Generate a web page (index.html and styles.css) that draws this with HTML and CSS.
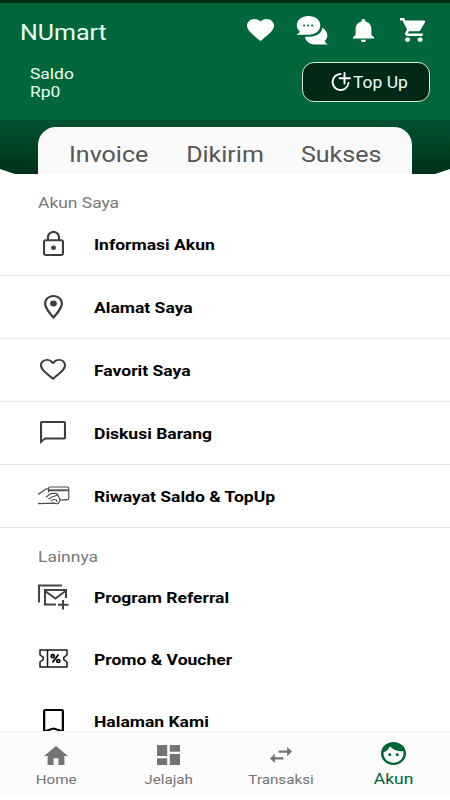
FILE: index.html
```html
<!DOCTYPE html>
<html lang="id">
<head>
<meta charset="utf-8">
<title>NUmart</title>
<link rel="stylesheet" href="styles.css">
</head>
<body>
<div class="app">
  <header class="header">
    <div class="toolbar">
      <h1 class="brand"><span class="wide">NUmart</span></h1>
      <div class="actions">
        <svg class="heart" viewBox="2 3 20 18.35" preserveAspectRatio="none"><path d="M12 21.35l-1.45-1.32C5.4 15.36 2 12.28 2 8.5 2 5.42 4.42 3 7.5 3c1.74 0 3.41.81 4.5 2.09C13.09 3.81 14.76 3 16.5 3 19.58 3 22 5.42 22 8.5c0 3.78-3.4 6.86-8.55 11.54z"/></svg>
        <svg class="chat" viewBox="0 0 32 29"><path d="M12.500 0C5.800 0 .8 4 .8 9.300c0 2.700 1.200 4.700 3 6.200C3.300 17 1.700 18.200.2 18.800h12.300c6.900 0 11.800-4 11.800-9.500S19.200 0 12.500 0z"/><path d="M26.300 11.700c3.200 1.800 5 4.400 5 7.500 0 2.400-1 4.400-2.600 5.900.5 1.400 1.700 2.600 3 3.500H19.700c-5.600 0-9.900-3.100-10.900-7.900h4.700c7 0 12.200-3.600 12.800-9z"/><g class="dots"><circle cx="8.200" cy="9.500" r="1.100"/><circle cx="12.200" cy="9.500" r="1.100"/><circle cx="16.200" cy="9.500" r="1.100"/></g></svg>
        <svg class="bell" viewBox="4 2.500 16 19.500" preserveAspectRatio="none"><path d="M12 22c1.100 0 2-.9 2-2h-4c0 1.100.89 2 2 2zm6-6v-5c0-3.070-1.640-5.640-4.500-6.320V4c0-.83-.67-1.500-1.500-1.500s-1.500.67-1.500 1.500v.68C7.630 5.360 6 7.920 6 11v5l-2 2v1h16v-1l-2-2z"/></svg>
        <svg class="cart" viewBox="1 2 20.700 20" preserveAspectRatio="none"><path d="M7 18c-1.100 0-1.990.9-1.990 2S5.900 22 7 22s2-.9 2-2-.9-2-2-2zM1 2v2h2l3.600 7.590-1.350 2.450c-.16.28-.25.61-.25.960 0 1.100.9 2 2 2h12v-2H7.420c-.14 0-.25-.11-.25-.25l.03-.12.9-1.630h7.450c.75 0 1.410-.41 1.750-1.030l3.580-6.490c.08-.14.12-.31.12-.48 0-.55-.45-1-1-1H5.210l-.94-2H1zm16 16c-1.100 0-1.990.9-1.990 2s.89 2 1.990 2 2-.9 2-2-.9-2-2-2z"/></svg>
      </div>
    </div>
    <div class="wallet">
      <div class="balance"><span class="wide">Saldo<br>Rp0</span></div>
      <button class="topup">
        <svg viewBox="0 0 21 20"><path d="M10.500 2A8 8 0 1 0 18.500 11M14.500 1v10.500M9.500 6.300h10.500"/></svg>
        <span class="wide">Top Up</span>
      </button>
    </div>
  </header>

  <div class="band">
    <div class="tabs">
      <a class="tab"><span class="wide">Invoice</span></a>
      <a class="tab"><span class="wide">Dikirim</span></a>
      <a class="tab"><span class="wide">Sukses</span></a>
    </div>
  </div>

  <main class="content">
    <h2 class="section"><span class="wide">Akun Saya</span></h2>
    <ul class="list ruled">
      <li><i class="icon"><svg class="lock" viewBox="4 1 16 21" preserveAspectRatio="none"><path d="M18 8h-1V6c0-2.760-2.240-5-5-5S7 3.240 7 6v2H6c-1.100 0-2 .9-2 2v10c0 1.100.9 2 2 2h12c1.100 0 2-.9 2-2V10c0-1.100-.9-2-2-2zM8.600 6c0-1.860 1.540-3.400 3.400-3.400s3.400 1.540 3.400 3.400v2H8.600V6zm9.800 14.400H5.600V9.600h12.800v10.800z"/><circle cx="12" cy="15" r="1.900"/></svg></i><span class="wide">Informasi Akun</span></li>
      <li><i class="icon"><svg class="pin" viewBox="5 2 14 20" preserveAspectRatio="none"><path d="M12 2C8.130 2 5 5.130 5 9c0 5.250 7 13 7 13s7-7.750 7-13c0-3.870-3.130-7-7-7zM6.700 9c0-2.900 2.400-5.300 5.300-5.300s5.300 2.400 5.300 5.300c0 2.880-3.180 7.490-5.300 10.180C9.920 16.510 6.700 11.850 6.700 9z"/><circle cx="12" cy="9" r="2.500"/></svg></i><span class="wide">Alamat Saya</span></li>
      <li><i class="icon"><svg class="love" viewBox="2 3 20 18.350" preserveAspectRatio="none"><path d="M16.500 3c-1.740 0-3.410.81-4.500 2.090C10.910 3.810 9.240 3 7.500 3 4.420 3 2 5.420 2 8.500c0 3.780 3.400 6.860 8.550 11.540L12 21.350l1.450-1.320C18.600 15.360 22 12.280 22 8.500 22 5.420 19.580 3 16.500 3zm-4.400 15.950l-.1.100-.1-.1C7.140 14.640 3.600 11.490 3.600 8.500 3.600 6.300 5.300 4.600 7.500 4.600c1.540 0 3.040 1.090 3.570 2.460h1.870C13.460 5.690 14.960 4.600 16.500 4.600c2.200 0 3.900 1.700 3.900 3.900 0 2.990-3.540 6.140-8.300 10.450z"/></svg></i><span class="wide">Favorit Saya</span></li>
      <li><i class="icon"><svg class="bubble" viewBox="2 2 20 20" preserveAspectRatio="none"><path d="M20.500 2H3.500Q2 2 2 3.500V22l4-4h14.500q1.500 0 1.500-1.500V3.500Q22 2 20.500 2zm-.1 14.300H5.500l-1.900 1.900V3.700h16.800v12.600z"/></svg></i><span class="wide">Diskusi Barang</span></li>
      <li><i class="icon"><svg class="hand" viewBox="0 0 33 20"><path d="M1 8.600L9 3 12 2.600M11.500 6.500V2.500Q11.500 1 13 1H30.300Q31.800 1 31.800 2.500V12Q31.800 13.800 30 13.800H22.500M9 11.300l4.500-3.600q6.500-.8 7 .7-.4 1.300-5.500 2.600l-3.500 2.300M20.500 8.600l2.300 4.200q.7 2.500-1.200 4.200-1.700 1.400-4 .2L10 17.400 1 17.700M14 15.200q1-1.800 3.500-1.700 2.600.4 2 2.500"/><path class="stripe" d="M12 4.300H31.500"/></svg></i><span class="wide">Riwayat Saldo &amp; TopUp</span></li>
    </ul>
    <h2 class="section second"><span class="wide">Lainnya</span></h2>
    <ul class="list">
      <li><i class="icon"><svg class="mail" viewBox="0 0 31 26"><path d="M1 18.500V1.500H24M7 20.500V6H28V14M6 20.500H18M7 7l10.500 7.500L27.500 7M25 16v9.500M20 20.700h10.500"/></svg></i><span class="wide">Program Referral</span></li>
      <li><i class="icon"><svg class="ticket" viewBox="0 0 29 19"><path d="M1 1H28V6L24.800 8.300V10.700L28 13V18H1V13L4.200 10.700V8.300L1 6ZM8.500 1V18"/><g class="percent"><path d="M19.500 5.500L13.500 13.500"/><circle cx="13.700" cy="7.200" r="1.500"/><circle cx="19.300" cy="12" r="1.500"/></g></svg></i><span class="wide">Promo &amp; Voucher</span></li>
      <li><i class="icon"><svg class="mark" viewBox="5 3 14 18" preserveAspectRatio="none"><path d="M17.500 3H6.500Q5 3 5 4.500V21l7-2.600 7 2.600V4.500Q19 3 17.500 3zm0 15.800L12 16.800l-5.500 2V4.500h11v14.300z"/></svg></i><span class="wide">Halaman Kami</span></li>
    </ul>
  </main>

  <nav class="nav">
    <a><i><svg class="home" viewBox="2 3 20 17" preserveAspectRatio="none"><path d="M10 20v-6h4v6h5v-8h3L12 3 2 12h3v8z"/></svg></i><span class="wide">Home</span></a>
    <a><i><svg class="grid" viewBox="3 3 18 18" preserveAspectRatio="none"><path d="M3 13h8V3H3v10zm0 8h8v-6H3v6zm10 0h8V11h-8v10zm0-18v6h8V3h-8z"/></svg></i><span class="wide">Jelajah</span></a>
    <a><i><svg class="swap" viewBox="3 5 18 14" preserveAspectRatio="none"><path d="M6.990 11L3 15l3.990 4v-3H14v-2H6.990v-3zM21 9l-3.990-4v3H10v2h7.010v3L21 9z"/></svg></i><span class="wide">Transaksi</span></a>
    <a class="active"><i><svg class="face" viewBox="2 2 20 20" preserveAspectRatio="none"><path d="M9 11.750c-.69 0-1.250.56-1.250 1.250s.56 1.250 1.250 1.250 1.250-.56 1.250-1.250-.56-1.250-1.250-1.250zm6 0c-.69 0-1.250.56-1.250 1.250s.56 1.250 1.250 1.250 1.250-.56 1.250-1.250-.56-1.250-1.250-1.250zM12 2C6.480 2 2 6.480 2 12s4.480 10 10 10 10-4.480 10-10S17.520 2 12 2zm0 18c-4.410 0-8-3.590-8-8 0-.29.02-.58.05-.86 2.360-1.050 4.230-2.980 5.210-5.370C11.070 8.330 14.050 10 17.420 10c.78 0 1.530-.09 2.250-.26.21.71.33 1.470.33 2.260 0 4.410-3.590 8-8 8z"/></svg></i><span class="wide">Akun</span></a>
  </nav>
</div>
</body>
</html>
```

FILE: styles.css
```css
* { box-sizing: border-box; margin: 0; padding: 0; }
body { font-family: Roboto, "Liberation Sans", sans-serif; background: #fff; }
svg { display: block; flex: none; overflow: visible; }
.wide { display: inline-block; transform: scaleX(1.125); transform-origin: left center; white-space: nowrap; }

.app { width: 450px; height: 800px; display: flex; flex-direction: column; overflow: hidden; background: #fff; }

.header { height: 120px; flex: none; background: #00673a; border-top: 3px solid #002c18; color: #eefff5; }
.toolbar { height: 56px; display: flex; justify-content: space-between; padding: 0 24px 0 20px; }
.brand { font-size: 22.500px; font-weight: 400; line-height: 58px; }
.brand .wide { transform: scaleX(1.11); }
.actions { display: flex; align-items: center; fill: #fff; height: 54px; }
.heart { width: 27px; height: 22px; }
.chat { width: 32px; height: 29px; margin-left: 22px; }
.dots { fill: #00673a; }
.bell { width: 21px; height: 23px; margin-left: 25px; }
.cart { width: 26px; height: 24px; margin-left: 26px; }
.wallet { display: flex; justify-content: space-between; padding: 3px 20px 0 30px; }
.balance { font-size: 15.500px; line-height: 18px; padding-top: 3px; }
.topup { width: 128px; height: 40px; display: flex; align-items: center; padding-left: 27px; background: #002817; border: 1px solid #d5e8de; border-radius: 12px; color: #f0fff6; font: 16px Roboto, sans-serif; }
.topup .wide { transform: scaleX(1.09); padding-top: 1px; }
.topup svg { width: 21px; height: 20px; margin-right: 2px; fill: none; stroke: #fff; stroke-width: 1.900; stroke-linecap: round; }

.band { height: 54px; flex: none; padding: 7px 38px 0; background: linear-gradient(#005330, #003219); clip-path: polygon(0 0, 100% 0, 100% 49px, 435px 100%, 15px 100%, 0 49px); }
.tabs { height: 47px; display: flex; justify-content: space-between; padding: 0 35px; background: #fafafa; border-radius: 18px 18px 0 0; color: #555; }
.tab { font-size: 22.500px; line-height: 55px; }
.tab .wide { transform: scaleX(1.11); transform-origin: center; }

.content { flex: 1; min-height: 0; overflow: hidden; }
.section { height: 39px; padding-left: 38px; font-size: 15.500px; font-weight: 400; line-height: 59px; color: #777; }
.section.second { height: 38px; }
.list { list-style: none; }
.list li { height: 62px; display: flex; align-items: center; font-size: 15.500px; font-weight: 700; color: #000; }
.list .wide { padding-top: 1px; transform: scaleX(1.13); }
.ruled li { height: 63px; border-bottom: 1.500px solid #e6e6e6; }
.icon { width: 94px; display: flex; justify-content: center; padding-left: 12px; padding-bottom: 1px; fill: #3d3d3d; }
.lock { width: 21px; height: 25px; }
.pin { width: 19px; height: 24px; }
.love { width: 26px; height: 21px; }
.bubble { width: 26px; height: 23px; }
.hand { width: 33px; height: 20px; fill: none; stroke: #4c4c4c; stroke-width: 1.200; stroke-linejoin: round; }
.stripe { stroke-width: 1.900; }
.mail { width: 31px; height: 26px; fill: none; stroke: #444; stroke-width: 2; }
.ticket { width: 29px; height: 19px; fill: none; stroke: #1a1a1a; stroke-width: 1.500; stroke-linejoin: round; }
.percent { stroke: #000; stroke-width: 1.700; }
.mark { width: 21px; height: 24px; fill: #000; }

.nav { height: 69px; flex: none; display: flex; background: linear-gradient(#fcfcfc 65px, #fff 65px); border-top: 1px solid #f2f2f2; color: #747474; fill: #747474; }
.nav a { flex: 1; display: flex; flex-direction: column; align-items: center; font-size: 13.500px; line-height: 16px; padding-top: 11px; }
.nav i { height: 24px; display: flex; align-items: center; margin-bottom: 4px; }
.nav .wide { transform-origin: center; }
.home { width: 24px; height: 19px; }
.grid { width: 23px; height: 20px; }
.swap { width: 22px; height: 16px; }
.face { width: 25px; height: 23px; }
.nav .active { color: #006437; fill: #006437; font-size: 15.500px; padding-top: 9px; }
.nav .active i { margin-bottom: 6px; }
```
